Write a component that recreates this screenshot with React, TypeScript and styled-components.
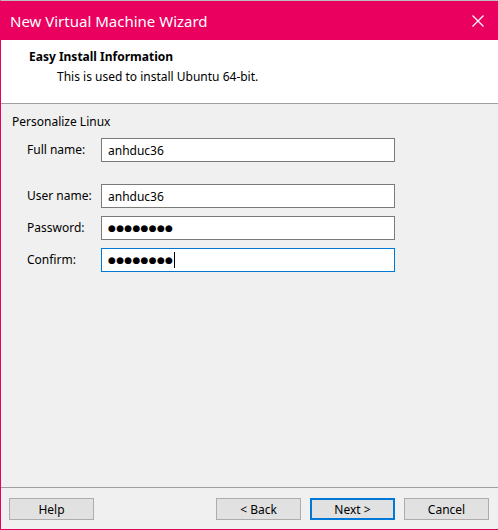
import styled, { createGlobalStyle } from 'styled-components';

const GlobalStyle = createGlobalStyle`
  html, body, #root {
    margin: 0;
    padding: 0;
    height: 100%;
  }
  body {
    font-family: 'Noto Sans', 'Open Sans', sans-serif;
    background: #f0f0f0;
  }
`;

const accent = '#ea005e';

const Window = styled.div`
  width: 498px;
  height: 530px;
  box-sizing: border-box;
  display: flex;
  flex-direction: column;
  border-top: 1px solid #bdbdbd;
  border-left: 1px solid ${accent};
  border-bottom: 1px solid ${accent};
  background: #f0f0f0;
`;

const TitleBar = styled.div`
  height: 39px;
  flex-shrink: 0;
  background: ${accent};
  margin-left: -1px;
  display: flex;
  align-items: center;
  justify-content: space-between;
  padding: 0 14px 0 10px;
  color: #fff;
  font-size: 15px;
`;

const Header = styled.div`
  height: 63px;
  flex-shrink: 0;
  background: #fff;
  border-bottom: 1px solid #a0a0a0;
  box-sizing: content-box;
  padding-left: 28px;
  display: flex;
  flex-direction: column;
`;

const HeaderTitle = styled.div`
  font-weight: 700;
  font-size: 12px;
  margin-top: 9px;
  line-height: 16px;
  color: #000;
`;

const HeaderText = styled.div`
  font-size: 12px;
  line-height: 16px;
  margin-top: 4px;
  padding-left: 28px;
  color: #000;
`;

const Body = styled.div`
  flex: 1;
  padding: 10px 0 0 11px;
  font-size: 12px;
  color: #000;
`;

const GroupLabel = styled.div`
  line-height: 16px;
  margin-bottom: 8px;
`;

const Form = styled.div`
  display: grid;
  grid-template-columns: 74px 294px;
  grid-template-rows: 24px 6px 24px 24px 24px;
  row-gap: 8px;
  padding-left: 15px;
  align-items: center;
`;

const Spacer = styled.div`
  grid-column: 1 / -1;
`;

const Label = styled.div`
  line-height: 16px;
`;

const Field = styled.div<{ $focused?: boolean }>`
  height: 24px;
  box-sizing: border-box;
  background: #fff;
  border: 1px solid ${(p) => (p.$focused ? '#0078d7' : '#7a7a7a')};
  padding-left: 6px;
  display: flex;
  align-items: center;
  font-size: 12px;
`;

const Dots = styled.span`
  font-family: 'DejaVu Sans', sans-serif;
  font-size: 9px;
  letter-spacing: 0.3px;
`;

const Caret = styled.span`
  display: inline-block;
  width: 1px;
  height: 16px;
  background: #000;
  margin-left: 1px;
`;

const Footer = styled.div`
  flex-shrink: 0;
  height: 42px;
  box-sizing: border-box;
  border-top: 1px solid #a0a0a0;
  display: flex;
  align-items: flex-start;
  padding: 10px 9px 0 8px;
`;

const Button = styled.div<{ $default?: boolean }>`
  width: 85px;
  height: 22px;
  box-sizing: border-box;
  background: #e1e1e1;
  border: ${(p) => (p.$default ? '2px solid #0078d7' : '1px solid #adadad')};
  font-size: 12px;
  display: flex;
  align-items: center;
  justify-content: center;
  color: #000;
`;

const ButtonGroup = styled.div`
  margin-left: auto;
  display: flex;
  gap: 9px;
`;

function CloseIcon() {
  return (
    <svg width="12" height="12" viewBox="0 0 12 12">
      <path d="M0.5 0.5 L11.5 11.5 M11.5 0.5 L0.5 11.5" stroke="#fff" strokeWidth="1.2" />
    </svg>
  );
}

export default function App() {
  return (
    <>
      <GlobalStyle />
      <Window>
        <TitleBar>
          <span>New Virtual Machine Wizard</span>
          <CloseIcon />
        </TitleBar>
        <Header>
          <HeaderTitle>Easy Install Information</HeaderTitle>
          <HeaderText>This is used to install Ubuntu 64-bit.</HeaderText>
        </Header>
        <Body>
          <GroupLabel>Personalize Linux</GroupLabel>
          <Form>
            <Label>Full name:</Label>
            <Field>anhduc36</Field>
            <Spacer />
            <Label>User name:</Label>
            <Field>anhduc36</Field>
            <Label>Password:</Label>
            <Field>
              <Dots>●●●●●●●●</Dots>
            </Field>
            <Label>Confirm:</Label>
            <Field $focused>
              <Dots>●●●●●●●●</Dots>
              <Caret />
            </Field>
          </Form>
        </Body>
        <Footer>
          <Button>Help</Button>
          <ButtonGroup>
            <Button>&lt; Back</Button>
            <Button $default>Next &gt;</Button>
            <Button>Cancel</Button>
          </ButtonGroup>
        </Footer>
      </Window>
    </>
  );
}
